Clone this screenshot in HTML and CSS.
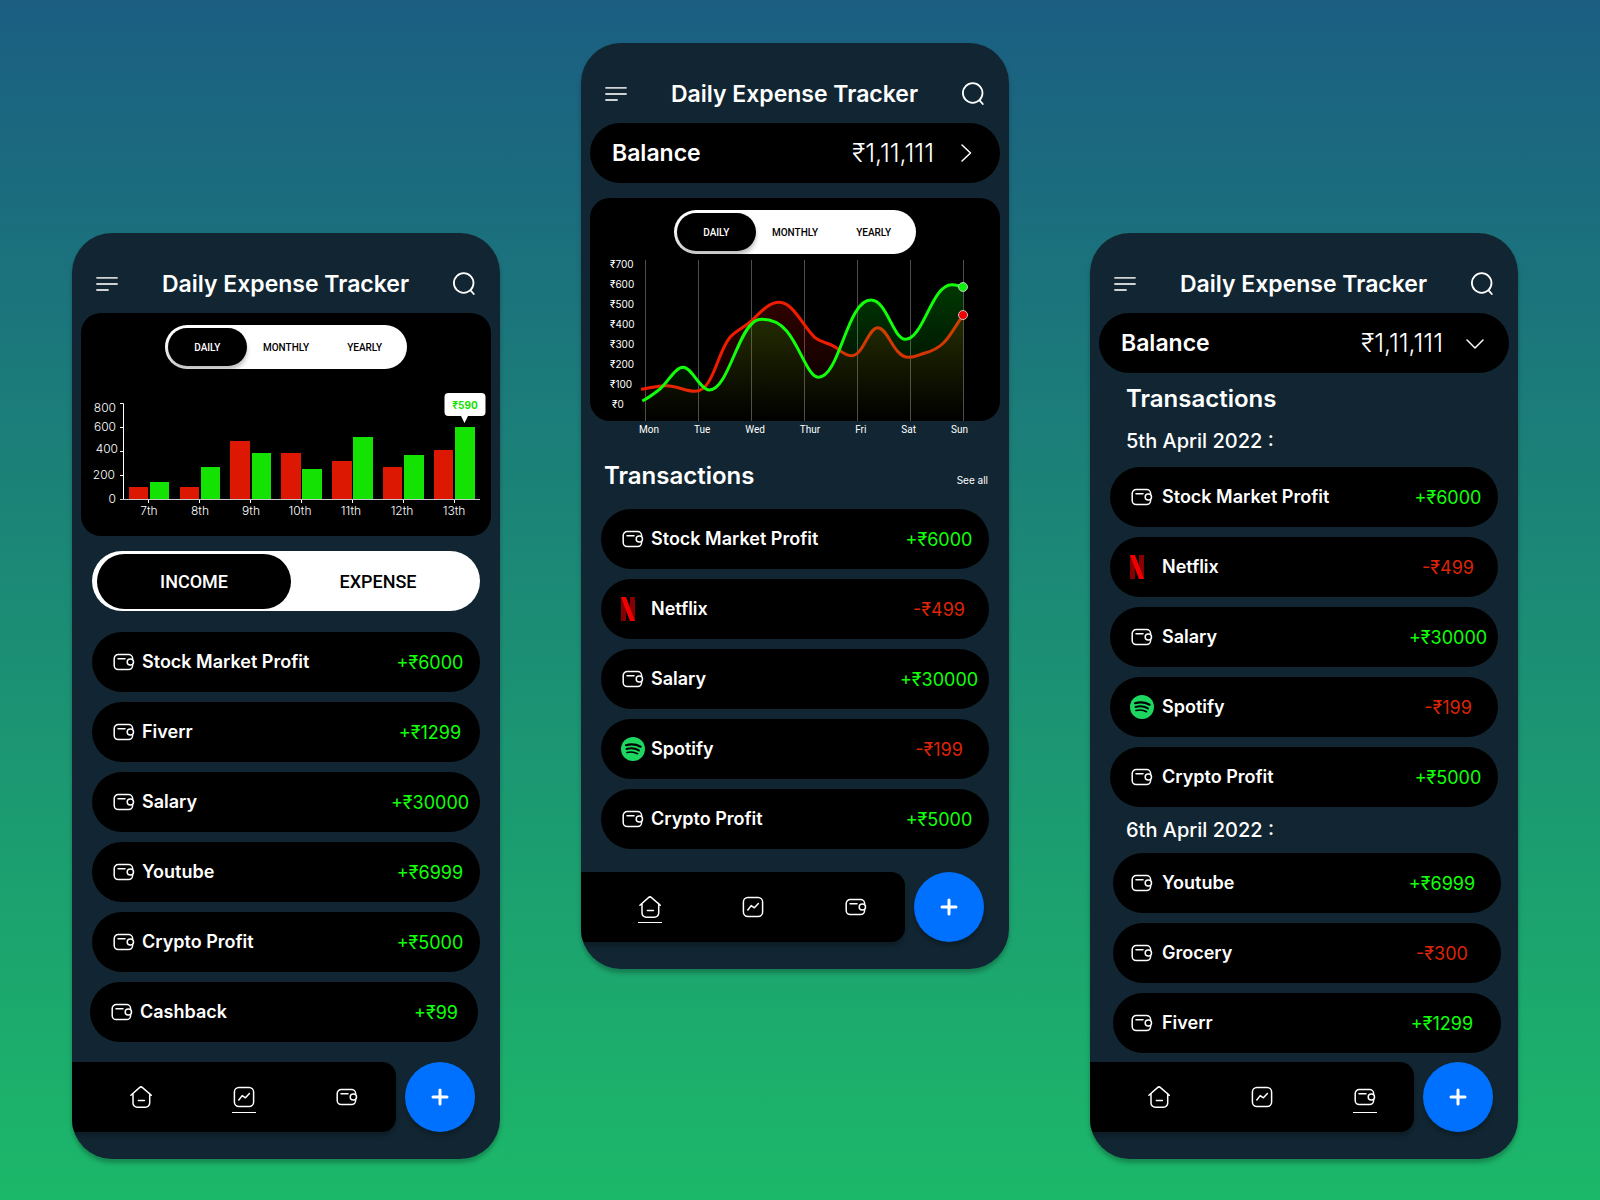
FILE: index.html
```html
<!DOCTYPE html>
<html lang="en">
<head>
<meta charset="utf-8">
<meta name="viewport" content="width=device-width, initial-scale=1">
<title>Daily Expense Tracker</title>
<link rel="stylesheet" href="styles.css">
</head>
<body>
<svg class="sprite" aria-hidden="true">
  <symbol id="i-menu" viewBox="0 0 24 24"><path d="M2 5.8h20M2 12h20M2 18h11"/></symbol>
  <symbol id="i-search" viewBox="0 0 24 24"><circle cx="11.7" cy="11" r="9.8"/><path d="M18.6 18.4l3.200 3.600"/></symbol>
  <symbol id="i-wallet" viewBox="0 0 24 24"><path d="M20.600 9V8.600a4 4 0 0 0-4-4H6.200a4 4 0 0 0-4 4v7a4 4 0 0 0 4 4h10.400a4 4 0 0 0 4-4V15"/><rect x="15.200" y="9" width="6.300" height="6" rx="3"/><path d="M6 8.800h7"/></symbol>
  <symbol id="i-chart" viewBox="0 0 24 24"><rect x="2.400" y="2.400" width="19.200" height="19.200" rx="4.500"/><path d="M6.800 15l3.400-4.400 3.200 2.200 4-4.200"/></symbol>
  <symbol id="i-home" viewBox="0 0 24 24"><path d="M1.900 10.200l8.600-7.600a2.200 2.200 0 0 1 3 0l8.800 7.600M4 8.600V18a4.300 4.300 0 0 0 4.300 4.300h8.100a4.300 4.300 0 0 0 4.300-4.300V8.600M9.400 15.500h6"/></symbol>
  <symbol id="i-right" viewBox="0 0 24 24"><path d="M8 4l8.500 8L8 20"/></symbol>
  <symbol id="i-down" viewBox="0 0 24 24"><path d="M4 9l8 8 8-8"/></symbol>
  <symbol id="i-plus" viewBox="0 0 24 24"><path d="M12 5v14M5 12h14"/></symbol>
  <symbol id="i-netflix" viewBox="0 0 24 24"><path fill="#850000" d="M0 0h5v24H0zM9 0h5v24H9z"/><path fill="#f20000" d="M0 0h5l9 24H9z"/></symbol>
  <symbol id="i-spotify" viewBox="0 0 24 24"><circle cx="12" cy="12" r="12" fill="#1ed760"/><g fill="none" stroke="#000" stroke-linecap="round"><path stroke-width="2.200" d="M5 8.200c5-1.400 10.300-.9 14.600 1.500"/><path stroke-width="1.900" d="M5.500 12c4.300-1.200 8.800-.7 12.400 1.400"/><path stroke-width="1.600" d="M6 15.500c3.700-1 7.400-.600 10.500 1.200"/></g></symbol>
</svg>

<main class="board">

  <section class="phone phone--low">
    <header class="topbar">
      <button class="icon-btn icon-btn--dim" aria-label="Menu"><svg class="icon"><use href="#i-menu"/></svg></button>
      <h1 class="title">Daily Expense Tracker</h1>
      <button class="icon-btn" aria-label="Search"><svg class="icon"><use href="#i-search"/></svg></button>
    </header>

    <div class="chart-card">
      <div class="segmented">
        <button class="segment segment--on" aria-pressed="true">DAILY</button>
        <button class="segment" aria-pressed="false">MONTHLY</button>
        <button class="segment" aria-pressed="false">YEARLY</button>
      </div>
      <svg class="plot" viewBox="0 0 410 167" role="img" aria-label="Income and expense by day">
        <g fill="#dd1802">
          <rect x="48" y="118" width="19" height="12"/><rect x="99" y="118" width="19" height="12"/><rect x="149" y="72" width="20" height="58"/><rect x="200" y="84" width="20" height="46"/><rect x="251" y="92" width="20" height="38"/><rect x="302" y="98" width="19" height="32"/><rect x="353" y="81" width="19" height="49"/>
        </g>
        <g fill="#13e203">
          <rect x="69" y="113" width="19" height="17"/><rect x="120" y="98" width="19" height="32"/><rect x="171" y="84" width="19" height="46"/><rect x="221" y="100" width="20" height="30"/><rect x="272" y="68" width="20" height="62"/><rect x="323" y="86" width="20" height="44"/><rect x="374" y="58" width="20" height="72"/>
        </g>
        <path class="axis" d="M39 34.500h3.500V130M39 58.500h3.500M39 82.500h3.500M39 106.500h3.500M67.500 130v4M118.500 130v4M169.500 130v4M220.500 130v4M271.500 130v4M322.500 130v4M373.500 130v4"/>
        <path class="axis axis--base" d="M39 130.500h360"/>
        <g class="bar-label" text-anchor="end">
          <text x="35" y="43">800</text><text x="35" y="62">600</text><text x="37" y="84">400</text><text x="34" y="110">200</text><text x="35" y="134">0</text>
        </g>
        <g class="bar-label" text-anchor="middle">
          <text x="68" y="146">7th</text><text x="119" y="146">8th</text><text x="170" y="146">9th</text><text x="219" y="146">10th</text><text x="270" y="146">11th</text><text x="321" y="146">12th</text><text x="373" y="146">13th</text>
        </g>
        <path fill="#fff" d="M367.500 24h33a4 4 0 0 1 4 4v15a4 4 0 0 1-4 4h-13.500l-3.500 7-3.500-7h-12.500a4 4 0 0 1-4-4v-15a4 4 0 0 1 4-4z"/>
        <text class="tip" x="384" y="40" text-anchor="middle">₹590</text>
      </svg>
    </div>

    <div class="toggle">
      <button class="toggle-btn toggle-btn--on" aria-pressed="true">INCOME</button>
      <button class="toggle-btn" aria-pressed="false">EXPENSE</button>
    </div>

    <ul class="list">
      <li class="row"><svg class="icon"><use href="#i-wallet"/></svg><span class="name">Stock Market Profit</span><span class="amount">+₹6000</span></li>
      <li class="row"><svg class="icon"><use href="#i-wallet"/></svg><span class="name">Fiverr</span><span class="amount">+₹1299</span></li>
      <li class="row"><svg class="icon"><use href="#i-wallet"/></svg><span class="name">Salary</span><span class="amount">+₹30000</span></li>
      <li class="row"><svg class="icon"><use href="#i-wallet"/></svg><span class="name">Youtube</span><span class="amount">+₹6999</span></li>
      <li class="row"><svg class="icon"><use href="#i-wallet"/></svg><span class="name">Crypto Profit</span><span class="amount">+₹5000</span></li>
    </ul>
    <ul class="list list--last">
      <li class="row"><svg class="icon"><use href="#i-wallet"/></svg><span class="name">Cashback</span><span class="amount">+₹99</span></li>
    </ul>

    <footer class="bottom">
      <nav class="nav">
        <a class="nav-link" href="#home" aria-label="Home"><svg class="icon"><use href="#i-home"/></svg></a>
        <a class="nav-link nav-link--on" href="#stats" aria-label="Statistics"><svg class="icon"><use href="#i-chart"/></svg></a>
        <a class="nav-link" href="#wallet" aria-label="Wallet"><svg class="icon"><use href="#i-wallet"/></svg></a>
      </nav>
      <button class="fab" aria-label="Add"><svg class="icon icon--plus"><use href="#i-plus"/></svg></button>
    </footer>
  </section>

  <section class="phone">
    <header class="topbar">
      <button class="icon-btn icon-btn--dim" aria-label="Menu"><svg class="icon"><use href="#i-menu"/></svg></button>
      <h1 class="title">Daily Expense Tracker</h1>
      <button class="icon-btn" aria-label="Search"><svg class="icon"><use href="#i-search"/></svg></button>
    </header>

    <button class="balance"><span class="balance-label">Balance</span><span class="balance-sum">₹1,11,111</span><svg class="icon"><use href="#i-right"/></svg></button>

    <div class="chart-card chart-card--spaced">
      <div class="segmented">
        <button class="segment segment--on" aria-pressed="true">DAILY</button>
        <button class="segment" aria-pressed="false">MONTHLY</button>
        <button class="segment" aria-pressed="false">YEARLY</button>
      </div>
      <svg class="plot" viewBox="0 0 410 167" role="img" aria-label="Income and expense this week">
        <defs>
          <linearGradient id="g-red" gradientUnits="userSpaceOnUse" x1="0" y1="46" x2="0" y2="167"><stop offset="0" stop-color="#f20d00" stop-opacity=".2"/><stop offset="1" stop-color="#f20d00" stop-opacity="0"/></linearGradient>
          <linearGradient id="g-green" gradientUnits="userSpaceOnUse" x1="0" y1="30" x2="0" y2="167"><stop offset="0" stop-color="#00ff0a" stop-opacity=".22"/><stop offset="1" stop-color="#00ff0a" stop-opacity="0"/></linearGradient>
        </defs>
        <path class="grid" d="M55.500 6v161M108.500 6v161M161.500 6v161M214.500 6v161M267.500 6v161M320.500 6v161M373.500 6v161"/>
        <path fill="url(#g-red)" d="M51 135.300C60 134 66.700 131.700 76.700 131.700S95 137.300 105 137.300C123.300 137.300 126.700 99.300 140 83.300 146.700 76 153.300 74.300 161.700 66.700 170 58.700 178.300 48.300 189.300 48.300 203.300 48.300 213.300 72.700 225 83.700 233.300 90.300 240 87.700 248.300 95.300 253.300 99.300 256.700 101.700 261.700 101.700 273.300 101.700 278.300 73.700 287.700 73.700 298.300 73.700 303.300 103.300 318.700 103.300 325 103.300 328.300 101 335 99 356.700 93.300 360 79.300 373.300 61V167H51z"/>
        <path class="curve curve--red" d="M51 135.300C60 134 66.700 131.700 76.700 131.700S95 137.300 105 137.300C123.300 137.300 126.700 99.300 140 83.300 146.700 76 153.300 74.300 161.700 66.700 170 58.700 178.300 48.300 189.300 48.300 203.300 48.300 213.300 72.700 225 83.700 233.300 90.300 240 87.700 248.300 95.300 253.300 99.300 256.700 101.700 261.700 101.700 273.300 101.700 278.300 73.700 287.700 73.700 298.300 73.700 303.300 103.300 318.700 103.300 325 103.300 328.300 101 335 99 356.700 93.300 360 79.300 373.300 61"/>
        <path fill="url(#g-green)" d="M52.300 147C59 143.700 63.300 140.300 70 135 78.300 127.700 85 113.300 93.300 113.300 101.700 113.300 110 136 119.300 136 136.700 136 146.700 82.700 161.700 70 165 66 168.300 65.300 172.300 65.300 183.300 65.300 190 69.300 196.700 77 210 92.700 218.300 123.300 228.300 123.300 250 123.300 256.700 46 281 46 296.700 46 303.300 85.300 315.300 85.300 333.300 85.300 341.700 30.700 361.700 30.700 366.700 30.700 370 32.700 373.300 33V167H52.300z"/>
        <path class="curve curve--green" d="M52.300 147C59 143.700 63.300 140.300 70 135 78.300 127.700 85 113.300 93.300 113.300 101.700 113.300 110 136 119.300 136 136.700 136 146.700 82.700 161.700 70 165 66 168.300 65.300 172.300 65.300 183.300 65.300 190 69.300 196.700 77 210 92.700 218.300 123.300 228.300 123.300 250 123.300 256.700 46 281 46 296.700 46 303.300 85.300 315.300 85.300 333.300 85.300 341.700 30.700 361.700 30.700 366.700 30.700 370 32.700 373.300 33"/>
        <circle class="dot" cx="373" cy="33" r="4.500" fill="#0df20d"/>
        <circle class="dot" cx="373" cy="61" r="4.500" fill="#f20000"/>
        <g class="rupee-label">
          <text x="20" y="14">₹700</text><text x="20" y="34">₹600</text><text x="20" y="54">₹500</text><text x="20" y="74">₹400</text><text x="20" y="94">₹300</text><text x="20" y="114">₹200</text><text x="20" y="134">₹100</text><text x="22" y="154">₹0</text>
        </g>
      </svg>
    </div>
    <div class="days"><span>Mon</span><span>Tue</span><span>Wed</span><span>Thur</span><span>Fri</span><span>Sat</span><span>Sun</span></div>

    <div class="section-head">
      <h2 class="heading">Transactions</h2>
      <a class="see-all" href="#all">See all</a>
    </div>
    <ul class="list">
      <li class="row"><svg class="icon"><use href="#i-wallet"/></svg><span class="name">Stock Market Profit</span><span class="amount">+₹6000</span></li>
      <li class="row"><svg class="icon icon--brand"><use href="#i-netflix"/></svg><span class="name">Netflix</span><span class="amount amount--out">-₹499</span></li>
      <li class="row"><svg class="icon"><use href="#i-wallet"/></svg><span class="name">Salary</span><span class="amount">+₹30000</span></li>
      <li class="row"><svg class="icon icon--brand"><use href="#i-spotify"/></svg><span class="name">Spotify</span><span class="amount amount--out">-₹199</span></li>
      <li class="row"><svg class="icon"><use href="#i-wallet"/></svg><span class="name">Crypto Profit</span><span class="amount">+₹5000</span></li>
    </ul>

    <footer class="bottom bottom--home">
      <nav class="nav">
        <a class="nav-link nav-link--on" href="#home" aria-label="Home"><svg class="icon"><use href="#i-home"/></svg></a>
        <a class="nav-link" href="#stats" aria-label="Statistics"><svg class="icon"><use href="#i-chart"/></svg></a>
        <a class="nav-link" href="#wallet" aria-label="Wallet"><svg class="icon"><use href="#i-wallet"/></svg></a>
      </nav>
      <button class="fab" aria-label="Add"><svg class="icon icon--plus"><use href="#i-plus"/></svg></button>
    </footer>
  </section>

  <section class="phone phone--low">
    <header class="topbar">
      <button class="icon-btn icon-btn--dim" aria-label="Menu"><svg class="icon"><use href="#i-menu"/></svg></button>
      <h1 class="title">Daily Expense Tracker</h1>
      <button class="icon-btn" aria-label="Search"><svg class="icon"><use href="#i-search"/></svg></button>
    </header>

    <button class="balance"><span class="balance-label">Balance</span><span class="balance-sum">₹1,11,111</span><svg class="icon"><use href="#i-down"/></svg></button>

    <h2 class="heading heading--ledger">Transactions</h2>
    <h3 class="date">5th April 2022 :</h3>
    <ul class="list list--ledger">
      <li class="row"><svg class="icon"><use href="#i-wallet"/></svg><span class="name">Stock Market Profit</span><span class="amount">+₹6000</span></li>
      <li class="row"><svg class="icon icon--brand"><use href="#i-netflix"/></svg><span class="name">Netflix</span><span class="amount amount--out">-₹499</span></li>
      <li class="row"><svg class="icon"><use href="#i-wallet"/></svg><span class="name">Salary</span><span class="amount">+₹30000</span></li>
      <li class="row"><svg class="icon icon--brand"><use href="#i-spotify"/></svg><span class="name">Spotify</span><span class="amount amount--out">-₹199</span></li>
      <li class="row"><svg class="icon"><use href="#i-wallet"/></svg><span class="name">Crypto Profit</span><span class="amount">+₹5000</span></li>
    </ul>
    <h3 class="date date--next">6th April 2022 :</h3>
    <ul class="list list--ledger list--next">
      <li class="row"><svg class="icon"><use href="#i-wallet"/></svg><span class="name">Youtube</span><span class="amount">+₹6999</span></li>
      <li class="row"><svg class="icon"><use href="#i-wallet"/></svg><span class="name">Grocery</span><span class="amount amount--out">-₹300</span></li>
      <li class="row"><svg class="icon"><use href="#i-wallet"/></svg><span class="name">Fiverr</span><span class="amount">+₹1299</span></li>
    </ul>

    <footer class="bottom bottom--ledger">
      <nav class="nav">
        <a class="nav-link" href="#home" aria-label="Home"><svg class="icon"><use href="#i-home"/></svg></a>
        <a class="nav-link" href="#stats" aria-label="Statistics"><svg class="icon"><use href="#i-chart"/></svg></a>
        <a class="nav-link nav-link--on" href="#wallet" aria-label="Wallet"><svg class="icon"><use href="#i-wallet"/></svg></a>
      </nav>
      <button class="fab" aria-label="Add"><svg class="icon icon--plus"><use href="#i-plus"/></svg></button>
    </footer>
  </section>

</main>
</body>
</html>
```
FILE: styles.css
```css
* { box-sizing: border-box; }

body {
  margin: 0;
  min-height: 100vh;
  background: linear-gradient(#1b5e82, #1cb869);
  color: #fff;
  font-family: Inter, "Noto Sans", sans-serif;
}

h1, h2, h3, ul { margin: 0; padding: 0; }
ul { list-style: none; }
a { color: inherit; text-decoration: none; }

button {
  margin: 0;
  padding: 0;
  border: 0;
  background: none;
  color: inherit;
  font: inherit;
  cursor: pointer;
}

.sprite { display: none; }

.icon {
  display: block;
  flex: none;
  width: 24px;
  height: 24px;
  fill: none;
  stroke: #fff;
  stroke-width: 1.5;
  stroke-linecap: round;
  stroke-linejoin: round;
}
.icon--brand { stroke: none; }
.icon--plus { stroke-width: 3; }

.board {
  display: grid;
  grid-template-columns: repeat(3, minmax(0, 1fr));
  align-items: start;
  gap: 81px;
  padding: 43px 82px 41px 72px;
}

.phone {
  overflow: hidden;
  padding-bottom: 27px;
  border-radius: 40px;
  background: #112632;
  box-shadow: 0 4px 4px rgba(0, 0, 0, .25);
}
.phone--low { margin-top: 190px; }

/* Header */
.topbar {
  display: flex;
  align-items: center;
  justify-content: space-between;
  padding: 36px 24px 14px 23px;
}
.title {
  font-size: 23px;
  font-weight: 600;
  line-height: 30px;
}
.icon-btn .icon { stroke-width: 1.8; }
.icon-btn--dim { opacity: .8; }

/* Balance bar */
.balance {
  display: flex;
  align-items: center;
  width: calc(100% - 18px);
  height: 60px;
  margin: 0 9px;
  padding: 0 22px;
  border-radius: 30px;
  background: #000;
  font-size: 23px;
}
.balance-label { font-weight: 600; }
.balance-sum {
  margin-left: auto;
  padding-right: 20px;
  font-size: 25px;
  font-weight: 300;
}

/* Charts */
.chart-card {
  margin: 0 9px;
  padding-top: 12px;
  border-radius: 20px;
  background: #000;
}
.chart-card--spaced { margin-top: 15px; }

.segmented {
  display: grid;
  grid-template-columns: repeat(3, 1fr);
  width: 242px;
  height: 44px;
  margin: 0 auto;
  padding: 3px;
  border-radius: 22px;
  background: #fff;
  overflow: hidden;
}
.segment {
  border-radius: 19px;
  color: #000;
  font-family: Roboto, sans-serif;
  font-size: 10px;
  font-weight: 500;
}
.segment--on {
  background: #000;
  color: #fff;
  box-shadow: 0 4px 4px rgba(0, 0, 0, .25);
}

.plot { display: block; width: 100%; }
.axis { fill: none; stroke: #fff; }
.axis--base { stroke: #c8c8c8; }
.bar-label {
  fill: #fff;
  font-size: 12px;
  font-weight: 300;
}
.tip {
  fill: #13e203;
  font-size: 10px;
  font-weight: 700;
}
.grid { stroke: #fff; stroke-opacity: .3; }
.curve { fill: none; stroke-width: 3; }
.curve--red { stroke: #f01c00; }
.curve--green { stroke: #12ff0a; }
.dot { stroke: #c4c4c4; }
.rupee-label {
  fill: #fff;
  font-size: 10px;
}

.days {
  display: flex;
  justify-content: space-between;
  margin: 3px 41px 0 58px;
  font-family: Roboto, sans-serif;
  font-size: 10px;
  line-height: 12px;
}

/* Income / expense switch */
.toggle {
  display: grid;
  grid-template-columns: 194px 1fr;
  height: 60px;
  margin: 15px 20px 21px;
  padding: 3px 15px 2px 5px;
  border-radius: 30px;
  background: #fff;
}
.toggle-btn {
  border-radius: 28px;
  color: #000;
  font-family: Roboto, sans-serif;
  font-size: 18px;
  font-weight: 500;
}
.toggle-btn--on { background: #000; color: #fff; }

/* Transactions */
.section-head {
  display: flex;
  align-items: baseline;
  justify-content: space-between;
  margin: 24px 21px 17px 23px;
}
.heading {
  font-size: 24px;
  font-weight: 600;
  line-height: 32px;
}
.heading--ledger { margin: 10px 36px 0; }
.see-all { font-size: 10px; }
.date {
  margin: 14px 36px;
  font-size: 20px;
  font-weight: 500;
  line-height: 24px;
}
.date--next { margin: 11px 36px; }

.list {
  display: grid;
  gap: 10px;
  margin: 0 20px;
}
.list--last { margin: 10px 22px 0 18px; }
.list--next { margin: 0 17px 0 23px; }

.row {
  display: flex;
  align-items: center;
  gap: 6px;
  height: 60px;
  padding-left: 20px;
  border-radius: 30px;
  background: #000;
}
.name {
  padding-bottom: 2px;
  font-size: 18px;
  font-weight: 600;
}
.amount {
  width: 100px;
  margin-left: auto;
  color: #12ff0a;
  font-size: 18px;
  text-align: center;
}
.amount--out { color: #dd2407; }
.list--last .amount { width: 84px; }
.list--ledger .row { gap: 8px; }
.list--next .row { padding: 0 9px 0 17px; }

/* Bottom bar */
.bottom {
  display: flex;
  gap: 9px;
  margin-top: 20px;
  padding-right: 25px;
}
.bottom--home { margin-top: 23px; }
.bottom--ledger { margin-top: 9px; }
.nav {
  display: flex;
  flex: 1;
  align-items: flex-start;
  justify-content: space-between;
  height: 70px;
  padding: 23px 37px 0 57px;
  border-radius: 0 14px 14px 0;
  background: #000;
  box-shadow: 0 4px 4px rgba(0, 0, 0, .25);
}
.nav-link { height: 28px; }
.nav-link--on { border-bottom: 1px solid #fff; }
.fab {
  display: grid;
  place-items: center;
  width: 70px;
  height: 70px;
  border-radius: 50%;
  background: #0071ff;
  box-shadow: 0 4px 4px rgba(0, 0, 0, .25);
}
```
